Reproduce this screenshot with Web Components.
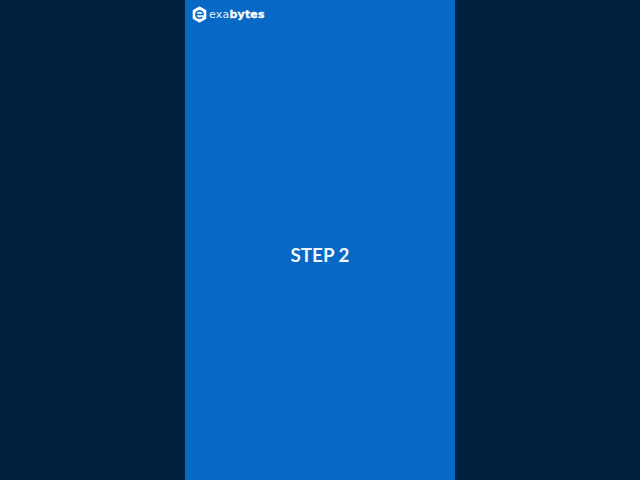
<!DOCTYPE html>
<html>
<head>
<meta charset="utf-8">
<style>
  html, body { margin: 0; height: 100%; background: #00213f; overflow: hidden; }
</style>
</head>
<body>
<short-frame>
  <brand-logo slot="top"></brand-logo>
  <step-title>STEP 2</step-title>
</short-frame>
<script>
class ShortFrame extends HTMLElement {
    constructor() {
        super();
        this.attachShadow({ mode: 'open' });
        this.shadowRoot.innerHTML = `
            <style>
                :host { display: flex; justify-content: center; height: 480px; background: #00213f; }
                .panel {
                    width: 270px;
                    height: 480px;
                    background: #0868c5;
                    display: grid;
                    grid-template-rows: 29px 1fr;
                }
                .top { padding: 6px 0 0 7px; }
                .center { display: flex; justify-content: center; align-items: center; }
            </style>
            <div class="panel">
                <div class="top"><slot name="top"></slot></div>
                <div class="center"><slot></slot></div>
            </div>
        `;
    }
}

class BrandLogo extends HTMLElement {
    constructor() {
        super();
        this.attachShadow({ mode: 'open' });
        this.shadowRoot.innerHTML = `
            <style>
                :host { display: flex; align-items: center; gap: 2px; height: 17px; color: #fff; font: 11px/17px "DejaVu Sans", sans-serif; }
                svg { width: 15px; height: 17px; display: block; }
                .name { white-space: nowrap; color: #e4eef8; letter-spacing: .2px; }
                b { font-weight: 700; color: #fff; -webkit-text-stroke: .3px #fff; }
            </style>
            <svg viewBox="0 0 15 17">
                <path d="M7.5 1.2 13.6 4.7V12.3L7.5 15.8 1.4 12.3V4.7Z" fill="#fff" stroke="#fff" stroke-width="1.4" stroke-linejoin="round"/>
                <path d="M3.8 8.5H11.2A3.7 3.7 0 1 0 10.3 10.9" fill="none" stroke="#0868c5" stroke-width="1.5"/>
            </svg>
            <span class="name">exa<b>bytes</b></span>
        `;
    }
}

class StepTitle extends HTMLElement {
    constructor() {
        super();
        this.attachShadow({ mode: 'open' });
        this.shadowRoot.innerHTML = `
            <style>
                :host { display: block; color: #f2f7fc; font: 700 18.8px/24px Lato, sans-serif; white-space: nowrap; }
            </style>
            <slot></slot>
        `;
    }
}

customElements.define('short-frame', ShortFrame);
customElements.define('brand-logo', BrandLogo);
customElements.define('step-title', StepTitle);
</script>
</body>
</html>
